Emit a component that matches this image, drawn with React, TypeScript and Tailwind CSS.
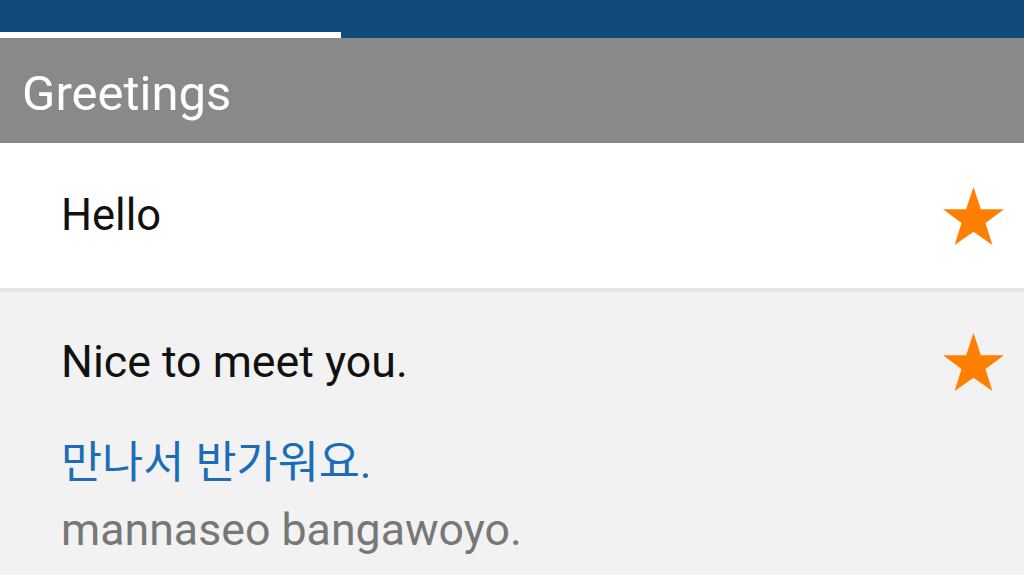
import React from "react";

function Star() {
  return (
    <svg width="61" height="58" viewBox="0 0 61 58" className="shrink-0">
      <path
        d="M30.5 0 L37.9 22.16 L61 22.16 L42.5 36 L49.35 58 L30.5 44.8 L11.65 58 L18.5 36 L0 22.16 L23.1 22.16 Z"
        fill="#ff8000"
      />
    </svg>
  );
}

export default function App() {
  return (
    <div
      className="w-[1024px] h-[575px] overflow-hidden bg-[#f2f2f2] flex flex-col"
      style={{ fontFamily: 'Roboto, "Noto Sans CJK KR", sans-serif' }}
    >
      <div className="h-[38px] bg-[#134a7c] flex flex-col justify-end shrink-0">
        <div className="h-[6px] w-[341px] bg-white" />
      </div>
      <div className="h-[105px] bg-[#898989] flex items-center px-[22px] pt-[6px] shrink-0">
        <span className="text-white text-[49px] leading-none">Greetings</span>
      </div>
      <div className="h-[145px] bg-white flex items-center justify-between pl-[61px] pr-[20px] shrink-0">
        <span className="text-[#111] text-[43.5px] leading-none">Hello</span>
        <Star />
      </div>
      <div className="h-[4px] bg-[#e4e4e4] shrink-0" />
      <div className="flex flex-col pl-[61px] pr-[20px] pt-[41px]">
        <div className="flex items-center justify-between">
          <span className="text-[#111] text-[44.7px] leading-none">Nice to meet you.</span>
          <Star />
        </div>
        <span className="mt-[50px] text-[#1a6db6] text-[44.7px] leading-none">만나서 반가워요.</span>
        <span className="mt-[22px] text-[#777] text-[44.7px] leading-none">mannaseo bangawoyo.</span>
      </div>
    </div>
  );
}
